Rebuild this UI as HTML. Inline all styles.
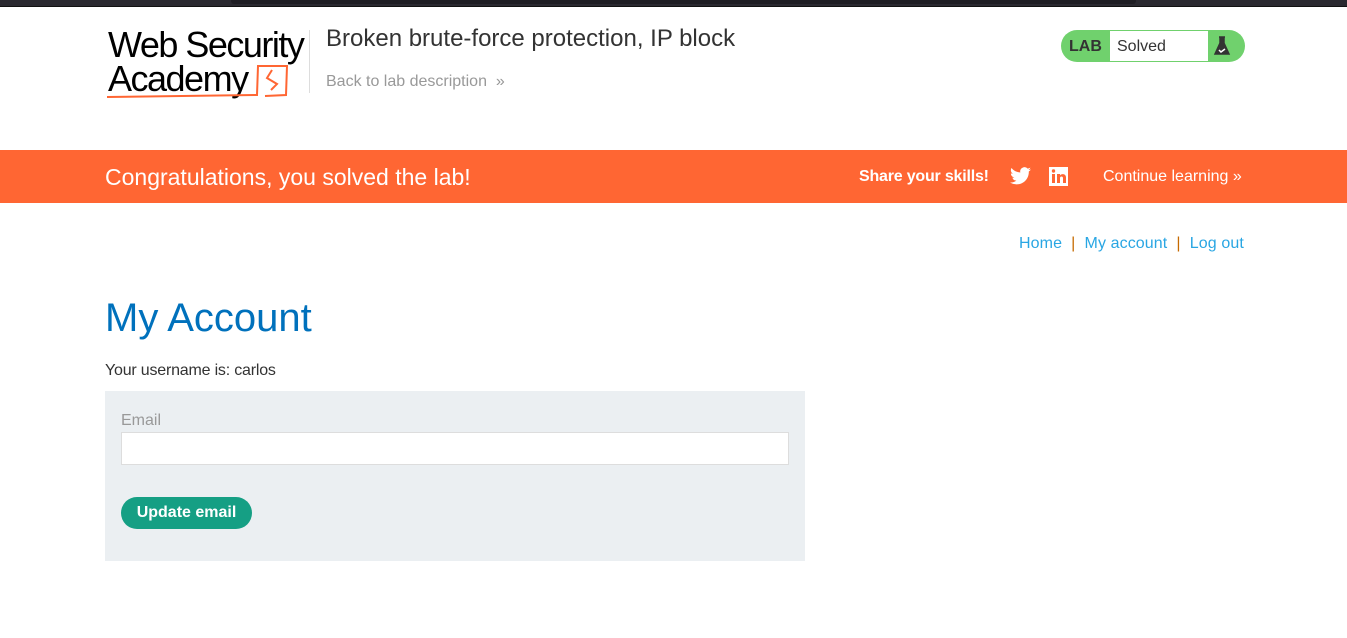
<!DOCTYPE html>
<html><head><style>
*{margin:0;padding:0;box-sizing:border-box}
body{width:1347px;height:638px;background:#fff;font-family:"Liberation Sans",Arial,sans-serif;position:relative;overflow:hidden}
.top{position:absolute;left:0;top:0;width:1347px;height:7px;background:#2a2930;border-bottom:1px solid #111}
.top div{position:absolute;left:231px;top:0;width:905px;height:4px;background:#1f1e24;border-radius:0 0 3px 3px}
.abs{position:absolute}
</style></head><body>
<div class="top"><div></div></div>
<div class="abs" style="left:108px;top:28px;font-size:36px;letter-spacing:-1.5px;line-height:34px;color:#000">Web Security<br>Academy</div>
<svg class="abs" style="left:105px;top:62px" width="185" height="40"><path d="M2 35 L152 33 L153 4 L182 4 L181 33 L160 34" fill="none" stroke="#ff6633" stroke-width="2"/><path d="M167 8 L162 16 L172 22 L166 28" fill="none" stroke="#ff6633" stroke-width="2"/></svg>
<div class="abs" style="left:309px;top:30px;width:1px;height:63px;background:#ddd"></div>
<div class="abs" style="left:326px;top:25px;font-size:24px;color:#333">Broken brute-force protection, IP block</div>
<div class="abs" style="left:326px;top:73px;font-size:16px;color:#999">Back to lab description &nbsp;»</div>
<div class="abs" style="left:1061px;top:30px;width:184px;height:32px;background:#70d16d;border-radius:16px"></div>
<div class="abs" style="left:1069px;top:38px;font-size:16px;font-weight:bold;color:#333">LAB</div>
<div class="abs" style="left:1110px;top:31px;width:98px;height:30px;background:#fff"></div>
<div class="abs" style="left:1117px;top:38px;font-size:16px;color:#333">Solved</div>
<svg class="abs" style="left:1213px;top:35px" width="18" height="22"><path d="M6 2h6M7 2v6L2 19h14L11 8V2" fill="#333" stroke="#333" stroke-width="1.5"/><path d="M6 15l2 2 4-3" stroke="#fff" fill="none" stroke-width="1.5"/></svg>
<div class="abs" style="left:0;top:150px;width:1347px;height:53px;background:#ff6633"></div>
<div class="abs" style="left:105px;top:164px;font-size:23px;color:#fff">Congratulations, you solved the lab!</div>
<div class="abs" style="left:859px;top:168px;font-size:16px;font-weight:bold;color:#fff;letter-spacing:-0.2px">Share your skills!</div>
<svg class="abs" style="left:1010px;top:167px" width="21" height="18" viewBox="0 0 24 20"><path fill="#fff" d="M24 2.4a10 10 0 0 1-2.8.8A5 5 0 0 0 23.3.4a10 10 0 0 1-3.1 1.2A4.9 4.9 0 0 0 11.8 6 14 14 0 0 1 1.7.9a4.9 4.9 0 0 0 1.5 6.6A4.9 4.9 0 0 1 1 6.9 4.9 4.9 0 0 0 4.9 11.8a5 5 0 0 1-2.2.1 4.9 4.9 0 0 0 4.6 3.4A10 10 0 0 1 0 17.3 14 14 0 0 0 7.5 19.5c9.1 0 14-7.5 14-14v-.6A10 10 0 0 0 24 2.4z"/></svg>
<svg class="abs" style="left:1049px;top:167px" width="19" height="19"><rect width="19" height="19" fill="#fff"/><rect x="3" y="7" width="3" height="9" fill="#ff6633"/><circle cx="4.5" cy="4" r="1.7" fill="#ff6633"/><path d="M8 7h3v1.5c1-2 6-2.2 6 2V16h-3v-5c0-2-3-2-3 0v5H8z" fill="#ff6633"/></svg>
<div class="abs" style="left:1103px;top:168px;font-size:16px;color:#fff">Continue learning <span style="letter-spacing:0">»</span></div>
<div class="abs" style="left:1019px;top:235px;font-size:16px;color:#29a6e3;letter-spacing:0.1px">Home <span style="color:#c66a00">&nbsp;|&nbsp;</span> My account <span style="color:#c66a00">&nbsp;|&nbsp;</span> Log out</div>
<div class="abs" style="left:105px;top:296px;font-size:40px;color:#0071bc">My Account</div>
<div class="abs" style="left:105px;top:362px;font-size:16px;color:#333;letter-spacing:-0.2px">Your username is: carlos</div>
<div class="abs" style="left:105px;top:391px;width:700px;height:170px;background:#ebeff2"></div>
<div class="abs" style="left:121px;top:412px;font-size:16px;color:#999">Email</div>
<div class="abs" style="left:121px;top:432px;width:668px;height:33px;background:#fff;border:1px solid #ddd"></div>
<div class="abs" style="left:121px;top:497px;width:131px;height:32px;background:#159f84;border-radius:16px;color:#fff;font-weight:bold;font-size:16px;text-align:center;line-height:32px">Update email</div>
</body></html>
